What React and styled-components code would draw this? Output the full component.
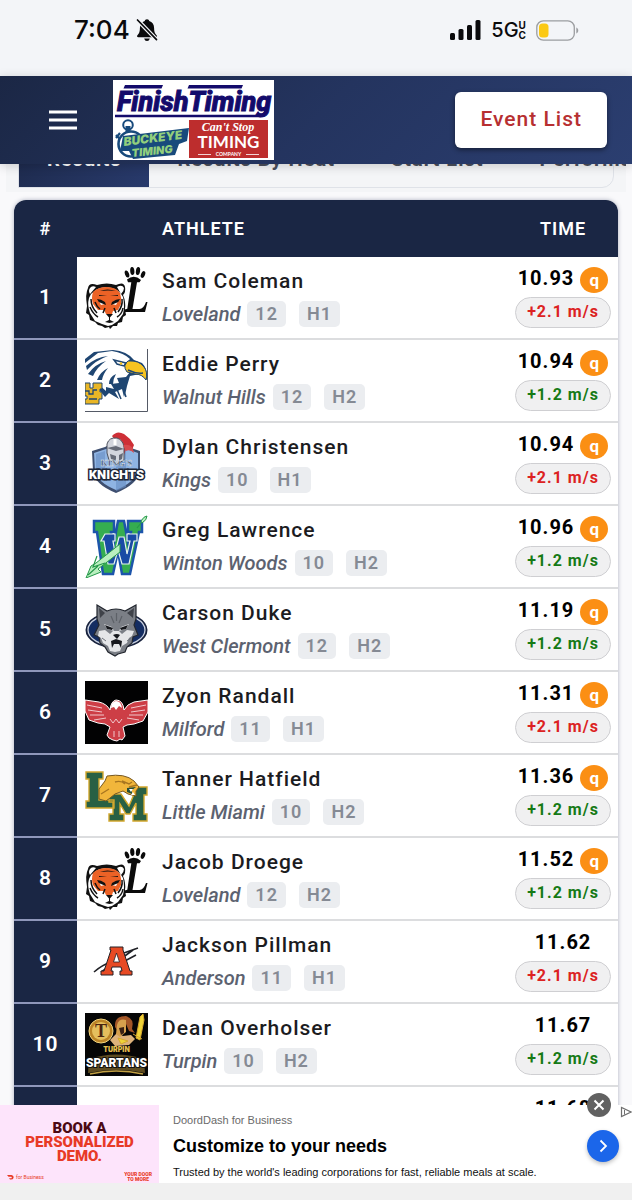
import React from 'react';
import styled, { createGlobalStyle, css } from 'styled-components';

const GlobalStyle = createGlobalStyle`
  *, *::before, *::after { box-sizing: border-box; }
  body { margin: 0; background: #f9f9fb; font-family: Roboto, "Liberation Sans", sans-serif; }
  button { font-family: inherit; cursor: pointer; }
`;

const Shell = styled.div`
  display: flex;
  flex-direction: column;
  height: 100vh;
  overflow: hidden;
`;

/* ---------- phone status bar ---------- */
const StatusBar = styled.div`
  flex: none;
  display: flex;
  align-items: center;
  justify-content: space-between;
  height: 76px;
  padding: 0 53px 16px 74px;
  background: #f3f5f8;
  color: #0a0a0c;
  font-family: Inter, sans-serif;
`;
const StatusGroup = styled.div`
  display: flex;
  align-items: center;
  gap: ${(p) => p.$gap}px;
`;
const Clock = styled.span`
  font-size: 26px;
  font-weight: 500;
  line-height: 30px;
`;
const Network = styled.span`
  display: flex;
  align-items: center;
  font-size: 20px;
  font-weight: 500;
  line-height: 24px;
`;
const NetworkBand = styled.span`
  display: flex;
  flex-direction: column;
  font-size: 10px;
  font-weight: 700;
  line-height: 10px;
`;

/* ---------- site header ---------- */
const Header = styled.header`
  flex: none;
  position: relative;
  z-index: 2;
  display: flex;
  align-items: center;
  height: 88px;
  padding: 0 25px 0 46px;
  background: linear-gradient(135deg, #1b2745 0%, #24345f 50%, #2b3e70 100%);
  box-shadow: 0 2px 10px rgba(0, 0, 0, 0.18);
`;
const MenuButton = styled.button`
  display: flex;
  padding: 0;
  margin-right: 33px;
  border: 0;
  background: none;
`;
const HomeLink = styled.a`
  display: block;
  line-height: 0;
`;
const EventButton = styled.button`
  margin-left: auto;
  height: 56px;
  padding: 0 25px 3px;
  border: 0;
  border-radius: 6px;
  background: #fff;
  color: #b72f31;
  font-size: 21px;
  font-weight: 500;
  letter-spacing: 1px;
  box-shadow: 0 2px 5px rgba(0, 0, 0, 0.45);
`;

/* ---------- scrolled content ---------- */
const Content = styled.main`
  flex: 1;
  min-height: 0;
  overflow: hidden;
`;
const TabStrip = styled.div`
  margin: -34px 6px 8px;
  padding: 0 12px 4px;
  background: #f4f5f7;
  overflow: hidden;
`;
const TabList = styled.div`
  display: flex;
  height: 58px;
  border: 1px solid #dfe2e8;
  border-radius: 12px;
  border-bottom-left-radius: 0;
`;
const Tab = styled.button`
  flex: none;
  padding: 0 28px;
  border: 0;
  background: ${(p) => (p.$active ? 'linear-gradient(135deg, #1c2848, #283a6c)' : 'none')};
  color: ${(p) => (p.$active ? '#fff' : '#4b4f5c')};
  font-size: 20px;
  font-weight: 700;
  line-height: 26px;
  letter-spacing: 1px;
`;

const Card = styled.section`
  margin: 0 14px;
  border-radius: 12px 12px 0 0;
  background: #fff;
  box-shadow: 0 0 4px rgba(30, 40, 80, 0.35);
  overflow: hidden;
`;
const Results = styled.table`
  width: 100%;
  table-layout: fixed;
  border-collapse: separate;
  border-spacing: 0;
`;
const HeadCell = styled.th`
  width: ${(p) => (p.$width ? `${p.$width}px` : 'auto')};
  height: 57px;
  padding: 0 ${(p) => (p.$align === 'left' ? 8 : 0)}px;
  background: #1a2644;
  color: #fff;
  font-size: 18px;
  font-weight: 600;
  letter-spacing: 1px;
  text-align: ${(p) => p.$align || 'center'};
`;
const Row = styled.tr`
  height: 83px;
`;
const cell = css`
  padding: 0;
  border-bottom: 2px solid #dcdddf;
`;
const RankCell = styled.th`
  ${cell}
  border-bottom-color: #8f97bb;
  background: #1a2644;
  color: #fff;
  font-size: 21px;
  font-weight: 600;
  letter-spacing: 1px;
  padding-bottom: 2px;
`;
const LogoCell = styled.td`
  ${cell}
  padding-left: 8px;
  line-height: 0;
`;
const AthleteCell = styled.td`
  ${cell}
  padding-left: 8px;
`;
const TimeCell = styled.td`
  ${cell}
`;
const Name = styled.div`
  color: #1c1c1f;
  font-size: 21px;
  font-weight: 500;
  line-height: 32px;
  letter-spacing: 1px;
  white-space: nowrap;
`;
const Detail = styled.div`
  display: flex;
  align-items: center;
  height: 34px;
`;
const School = styled.em`
  margin-right: 7px;
  color: #5c6270;
  font-size: 20px;
  font-weight: 500;
  line-height: 26px;
  white-space: nowrap;
`;
const Chip = styled.span`
  margin-right: 13px;
  padding: 0 8px;
  border-radius: 5px;
  background: #ebedf0;
  color: #858a94;
  font-size: 18px;
  font-weight: 600;
  line-height: 26px;
  letter-spacing: 1px;
`;
const TimeStack = styled.div`
  display: flex;
  flex-direction: column;
  align-items: center;
  gap: 4px;
`;
const TimeLine = styled.div`
  display: flex;
  align-items: center;
  gap: 6px;
  height: 26px;
`;
const Mark = styled.strong`
  padding-bottom: 4px;
  color: #000;
  font-size: 20px;
  font-weight: 700;
  line-height: 24px;
  letter-spacing: 1px;
`;
const Qualifier = styled.span`
  width: 28px;
  height: 26px;
  border-radius: 50%;
  background: #fb8f14;
  color: #fff;
  font-size: 17px;
  font-weight: 700;
  line-height: 26px;
  text-align: center;
`;
const Wind = styled.span`
  width: 96px;
  height: 31px;
  border: 1px solid #cfcfd2;
  border-radius: 16px;
  background: #f0f0f1;
  color: ${(p) => (p.$over ? '#dc2222' : '#167a16')};
  font-size: 16px;
  font-weight: 700;
  line-height: 28px;
  letter-spacing: 1px;
  text-align: center;
`;

/* ---------- sponsored banner ---------- */
const Banner = styled.aside`
  flex: none;
  position: relative;
  z-index: 3;
  display: flex;
  height: 95px;
  border-bottom: 17px solid #f0f0f0;
  background: #fff;
  font-family: "Liberation Sans", Arial, sans-serif;
`;
const Promo = styled.div`
  flex: none;
  display: flex;
  flex-direction: column;
  justify-content: space-between;
  width: 159px;
  padding: 16px 7px 1px;
  background: #fde4fb;
  color: #e83a26;
  font-family: Roboto, sans-serif;
`;
const PromoTitle = styled.div`
  font-size: 15px;
  font-weight: 900;
  line-height: 14px;
  text-align: center;
`;
const PromoDark = styled.span`
  color: #4c0913;
`;
const PromoFoot = styled.div`
  display: flex;
  align-items: center;
  justify-content: space-between;
  font-size: 5px;
  font-weight: 900;
  line-height: 5px;
  text-align: center;
`;
const PromoBrand = styled.span`
  display: flex;
  align-items: center;
  gap: 2px;
  font-weight: 400;
`;
const Copy = styled.div`
  flex: 1;
  min-width: 0;
  padding: 6px 0 0 14px;
  white-space: nowrap;
`;
const Sponsor = styled.div`
  color: #6a6a6a;
  font-size: 11px;
  line-height: 18px;
`;
const Headline = styled.div`
  margin: 6px 0;
  color: #000;
  font-size: 18px;
  font-weight: 700;
  line-height: 22px;
`;
const Blurb = styled.div`
  color: #111;
  font-size: 11px;
  line-height: 18px;
`;
const GoLink = styled.a`
  flex: none;
  align-self: center;
  display: flex;
  align-items: center;
  justify-content: center;
  width: 32px;
  height: 32px;
  margin: 4px 13px 0 0;
  border-radius: 50%;
  background: #1b66ea;
  box-shadow: 0 2px 4px rgba(0, 0, 0, 0.25);
`;
const CloseButton = styled.button`
  position: absolute;
  top: -12px;
  right: 21px;
  display: flex;
  align-items: center;
  justify-content: center;
  width: 24px;
  height: 24px;
  padding: 0;
  border: 0;
  border-radius: 50%;
  background: #616161;
`;
const AdChoices = styled.a`
  position: absolute;
  top: 1px;
  right: 0;
  line-height: 0;
`;

/* ---------- status icons ---------- */
const MutedBell = () => (
  <svg width="22" height="24" viewBox="0 0 22 24" aria-hidden="true">
    <path d="M11 1.300c1.300 0 2.100.8 2.200 1.800 3.100.9 4.900 3.500 4.900 6.900 0 4.500 1.100 5.700 2.500 7.300.8.900.3 2-.9 2H2.300c-1.200 0-1.700-1.100-.9-2 1.400-1.600 2.500-2.800 2.500-7.300 0-3.400 1.800-6 4.900-6.900.1-1 .9-1.800 2.200-1.800Z" fill="#0a0a0c" />
    <path d="M8.200 20.500h5.600c-.4 1.700-1.400 2.500-2.800 2.500s-2.400-.8-2.800-2.500Z" fill="#0a0a0c" />
    <path d="M1.500 2 20.500 21.700" stroke="#f3f5f8" strokeWidth="4" />
    <path d="M1.500 2 20.500 21.700" stroke="#0a0a0c" strokeWidth="1.700" strokeLinecap="round" />
  </svg>
);
const Signal = () => (
  <svg width="31" height="20" viewBox="0 0 31 20" fill="#0a0a0c" aria-hidden="true">
    <rect x="0" y="13" width="5" height="7" rx="1.500" />
    <rect x="8.500" y="9" width="5" height="11" rx="1.500" />
    <rect x="17" y="5" width="5" height="15" rx="1.500" />
    <rect x="25.500" y="0" width="5" height="20" rx="1.500" />
  </svg>
);
const Battery = () => (
  <svg width="43" height="21" viewBox="0 0 43 21" aria-hidden="true">
    <rect x="0.800" y="0.800" width="37.500" height="19.400" rx="6.500" fill="none" stroke="#9b9da0" strokeWidth="1.300" />
    <rect x="3" y="3.500" width="9.500" height="14" rx="3.500" fill="#fbc914" />
    <path d="M40.300 7.500c2.600 1 2.600 5 0 6Z" fill="#9b9da0" />
  </svg>
);

/* ---------- brand mark ---------- */
const BrandLogo = () => (
  <svg width="161" height="80" viewBox="0 0 161 80" role="img" aria-label="Finish Timing">
    <rect width="161" height="80" fill="#fff" />
    <text x="4" y="31" fontFamily="Roboto" fontSize="27" fontWeight="800" fontStyle="italic" fill="#130b6b" stroke="#130b6b" strokeWidth="1">FinishTiming</text>
    <path d="M12 5h38l-1.500 3.500H10.500ZM76 5h54l-1.500 3.500H74.500Z" fill="#130b6b" />
    <path d="M2 36h144q5 0 7-5" fill="none" stroke="#130b6b" strokeWidth="2.600" />
    <g fill="none" stroke="#184a7c">
      <circle cx="18" cy="64" r="12.500" strokeWidth="2.600" />
      <circle cx="15" cy="45" r="4.800" strokeWidth="2" />
      <path d="M15 46v6" strokeWidth="5" />
      <path d="m3 55 4 4M7 53l-4 5" strokeWidth="2.200" />
    </g>
    <path d="m10 56 66-8-2 13-8 3-4 11-42 4-4-8-9 0Z" fill="#184a7c" />
    <g fontFamily="Inter" fontStyle="italic" fontWeight="900" fill="#91cf7d">
      <text x="11" y="66" fontSize="12" transform="rotate(-7 11 66)">BUCKEYE</text>
      <text x="19" y="77" fontSize="11" transform="rotate(-6 19 77)">TIMING</text>
    </g>
    <rect x="76" y="40" width="79" height="38" fill="#bd2d2d" />
    <text x="115" y="51" textAnchor="middle" fontFamily="Liberation Serif" fontStyle="italic" fontWeight="700" fontSize="12" fill="#fff">Can't Stop</text>
    <text x="115.500" y="68" textAnchor="middle" fontFamily="Lato" fontWeight="700" fontSize="17" fill="#fff">TIMING</text>
    <text x="115.500" y="76" textAnchor="middle" fontFamily="Lato" fontWeight="700" fontSize="5" fill="#fff">COMPANY</text>
    <path d="M85 74.500h13M133 74.500h13" stroke="#fff" strokeWidth="0.800" />
  </svg>
);

/* ---------- school logos ---------- */
const Crest = ({ label, children }) => (
  <svg width="63" height="63" viewBox="0 0 63 63" role="img" aria-label={label}>{children}</svg>
);

const Loveland = () => (
  <Crest label="Loveland">
    <g fill="#0b0b0b">
      <ellipse cx="42" cy="8" rx="2" ry="3.700" transform="rotate(-20 42 8)" />
      <ellipse cx="47.300" cy="5" rx="2.100" ry="4" transform="rotate(-5 47.300 5)" />
      <ellipse cx="53" cy="5" rx="2.100" ry="4" transform="rotate(8 53 5)" />
      <ellipse cx="58" cy="8.500" rx="2" ry="3.500" transform="rotate(22 58 8.500)" />
      <path d="M42 13.500q7-5.500 14 .5l-1.500 2.200h-2.500L47.500 43h7q4 0 6.500-7h1.500L60 46H39l.8-2.500 2.500-.8 4-26.500H43Z" />
    </g>
    <path d="M3 22q1-6 9-3 10-3 19 0 8-4 9 2 1 5-2 8 3 7 2 14l1 6-3 2-1 5-4 1-1 3-4 0-3 3-1-2-4 1-3-2-4-1-3-3-5-2-1-5-3-2 1-7q-2-12 1-18Z" fill="#111" />
    <path d="M5 22q2-3 6-1l-6 7Q3 25 5 22ZM32 21q5-3 7 1 0 3-3 6Z" fill="#fff" />
    <path d="M4 32q4-10 17-11 13 1 17 10 2 9 0 17l-5 7-6 4-4 1-6-2-7-3-5-8Q2 39 4 32Z" fill="#fff" />
    <path d="M8 26q5-5 14-5 9 0 13 6 2 6 1 11l-3 6-5 1-1 3h-6l-2-4-6 0-5-6Q6 32 8 26Z" fill="#ec6226" />
    <path d="m14 35 6 3-4 1ZM33 35l-6 3 4 1Z" fill="#fff" />
    <path d="M12 33q4 0 8 3l1 3-5-2q-3-1-4-4ZM35 33q-4 0-8 3l-1 3 5-2q3-1 4-4ZM15 25q7-3 16 0-8-1-16 0ZM14 29l8 0-8 1ZM33 29l-8 0 8 1ZM21 48h7l-3.500 4ZM24 50h1v4l4 2-4.500 1-4.500-1 4-2Z" fill="#111" />
    <path d="M6 33q0 8 6 14M5 41q3 7 8 10M10 36q2 5 5 7M37 33q1 7-4 13M38 42q-1 6-6 9M20 42l-2 5M29 42l2 5" fill="none" stroke="#111" strokeWidth="1.500" />
  </Crest>
);

const WalnutHills = () => (
  <Crest label="Walnut Hills">
    <path d="M0 62.500h62.500V0" fill="none" stroke="#555a66" strokeWidth="1" />
    <path d="M0 10 9 3 28 1q14 1 21 10l8 3q6 6 5 17-4-6-12-5l-5 1-3 10q-1 6-3 11l-2-8-7 3 4 7-10-6-4 4-8-10-13-1Z" fill="#1f4672" />
    <path d="M0 14 13 4l14-2q12 2 18 8l-5 5 5 8-4 5-9 1 2 5-8 1 3 5-8-2 0 4-8-7-5 4-8-1Z" fill="#fff" />
    <path d="M1 17q10-9 22-10Q11 11 2 21ZM3 25q7-10 18-13-9 6-13 15ZM12 31q3-8 11-12-5 6-6 12ZM24 35q0-7 7-10-3 5-3 10Z" fill="#1f4672" />
    <path d="M43 12q11-1 16 6 4 5 2 13-4-6-11-6l-8-2q-5-7 1-11Z" fill="#f6c321" stroke="#1f4672" strokeWidth="1" />
    <path d="M43 21q8 4 15 3M29 11l12 3-2 3-7-2ZM38 39l3 9M31 38l5 12" fill="none" stroke="#1f4672" strokeWidth="1.500" />
    <circle cx="36" cy="14.500" r="1.300" fill="#f6c321" />
    <path d="M0 34h5v5h3v-5h9v6h-2v3h2v7h-3v5H0v-5h2v-3H0Z" fill="#e9b626" stroke="#1f4672" strokeWidth="1" />
    <path d="M0 42h4v3h4v-4h4M4 50h8" fill="none" stroke="#1f4672" strokeWidth="1.300" />
  </Crest>
);

const Kings = () => (
  <Crest label="Kings Knights">
    <path d="m7 19 13-4 11-6 12 6 12 4v20q-2 13-24 22Q9 52 8 39Z" fill="#3e4f70" />
    <path d="m9 21 12-4 10-5 11 5 11 4v18q-3 11-22 19Q12 50 10 39Z" fill="#8fb4e3" />
    <path d="m31 13 10 5v37l-10 4ZM11 22l9-3v30q-9-6-9-13Z" fill="#6a91c6" opacity=".65" />
    <path d="M27 4q5-6 12-2l6 5 4 6-2 5-6-1-2 6-5-6-2-6Z" fill="#ce2f36" />
    <path d="M22 12q2-7 10-6 6 2 7 9v13l-7 4-8-4-2-7Z" fill="#d2d5dd" stroke="#4e535e" strokeWidth="1" />
    <path d="m22 16 9-2 8 3-8 2ZM25 22l6 2v5l-5-2ZM34 23l4-2-1 6-3 2Z" fill="#656a77" />
    <path d="M30 7v6" stroke="#fff" strokeWidth="3" />
    <path d="M38 13q10-2 11 8-4-4-8-2Z" fill="#d64a4e" />
    <text x="31.500" y="34" textAnchor="middle" fontFamily="Liberation Serif" fontSize="9" fontWeight="700" fill="#31405b" stroke="#dfe5ef" strokeWidth=".4">KING'S</text>
    <text x="31.500" y="47" textAnchor="middle" fontFamily="Roboto" fontSize="13" fontWeight="900" fill="#fff" stroke="#1d2637" strokeWidth="3" paintOrder="stroke">KNIGHTS</text>
  </Crest>
);

const WintonWoods = () => (
  <Crest label="Winton Woods">
    <path d="M9 6h20v11h-3l2 16 5-27h6l5 27 2-16h-3V6h14v11h-3l-9 42H37l-4-23-5 23H18L12 17H9Z" fill="#35ad50" stroke="#1c55ab" strokeWidth="2.500" />
    <path d="M20 19h10v7h-2l2 12 4-16h5l3 17 3-13h-3v-7h10v7h-3l-5 23h-7l-4-14-4 14h-6l-4-23h-3Z" fill="#194ba5" stroke="#e8f4ef" strokeWidth="1.200" />
    <path d="M62 1q-3 0-6 5l1 2q5-3 5-7ZM35 29 11 48l-5 3-5 12 15-6-3-3 22-17Z" fill="#b9efbf" stroke="#26994a" strokeWidth="1" />
    <path d="m56 8-4 5M3 60l10-9M12 41l-4 11 12-4" stroke="#26994a" strokeWidth="1.200" fill="none" />
  </Crest>
);

const WestClermont = () => (
  <Crest label="West Clermont">
    <ellipse cx="31.500" cy="32" rx="31" ry="18.500" fill="#17213c" />
    <ellipse cx="31.500" cy="32" rx="28.500" ry="16" fill="#142d62" stroke="#c7cfdf" strokeWidth="1.300" />
    <path d="m12 7 10 6q9-4 18 0l11-6 0 14-2 6 4 10-5 2-1 6-5 4-2 5-7 2-3 2-7-4-3-5-5-4-1-6-5-2 5-10-2-6Z" fill="#7b7f86" stroke="#22262e" strokeWidth="1.200" />
    <path d="m14 10 6 5-5 5ZM49 10l-7 5 6 5Z" fill="#3f4249" />
    <path d="m14 33 6-1 5 4 3-3h6l3 3 5-4 7 1-2 5-3 2-2 5-5 3-2 5-5 1-5-1-2-5-5-3-2-5-3-2Z" fill="#e5e6e8" />
    <path d="m19 26 8 3 2 4-7-2ZM44 26l-8 3-2 4 7-2Z" fill="#dfe1e4" />
    <path d="m20 27 8 3-1 2-5-1ZM43 27l-8 3 1 2 5-1ZM28 37q4-2 7 0l-3 4ZM26 43l5-2 6 2-1 7-2-4h-5l-2 4Z" fill="#16181d" />
    <path d="m26 18 3 7M37 18l-3 7M31.500 15v8" stroke="#5d6168" strokeWidth="1.200" />
    <path d="m17 40 4 3M46 40l-4 3" stroke="#6c7077" strokeWidth="1" />
  </Crest>
);

const Milford = () => (
  <Crest label="Milford">
    <rect width="63" height="63" fill="#020203" />
    <path d="M0 19l14 2q8 2 11 8 1-9 6-10 7 0 8 10 3-6 10-8l14-2v12l-5 9-9 3-7 1-4 2 2 9-3 4-2-1-3 2-4-1-4-2-2-3 3-8-5-3-7-1-9-3-4-9Z" fill="#cd3e46" stroke="#fff" strokeWidth="1" />
    <path d="M26 27q0-6 5-7 5 0 6 7l-3-2-3 4-2-3Z" fill="#fff" />
    <path d="m2 24 15 3M3 29l14 2M5 34l14 0M9 39l12-2M61 24l-15 3M60 29l-14 2M58 34l-14 0M54 39l-12-2M25 38l3 4 3-4 3 4 3-4M29 50v6M34 50v6" fill="none" stroke="#f0c7cb" strokeWidth="1" />
  </Crest>
);

const LittleMiami = () => (
  <Crest label="Little Miami">
    <path d="M1 8h17v7h-4v21h15v8H1v-7h3V15H1ZM24 50h4V38h-4v-8h12l8 12 8-19h10v8h-3v19h3v7H48v-7h3V39l-6 11h-4l-6-10v10h4v7H24Z" fill="#286044" stroke="#d2a72d" strokeWidth="1.400" />
    <path d="M14 35V25l6-8 2-5q18-3 27 5l5 6-3 4 0 5-8-2-5-3-8 3-5 4-4 3Z" fill="#f1b63b" stroke="#775821" strokeWidth="1" />
    <path d="m37 17 7 3 3-2M44 23l8-2M30 18q6-2 10 2M16 30l8-5" fill="none" stroke="#a87620" strokeWidth="1.400" />
    <path d="m42 24 9-1-4 3v4l-5-2Z" fill="#254e3b" />
    <path d="m44 25 2 3 2-3ZM46 31l2-3 2 3Z" fill="#fff" />
  </Crest>
);

const Anderson = () => (
  <Crest label="Anderson">
    <path d="M9 42q8-7 17-10M16 42q6-5 12-7M36 24l17-6M37 28l11-8M38 32l13-7" stroke="#202126" strokeWidth="1.600" fill="none" />
    <path d="M25 17h13v3l7 21h2v4H35v-4h2l-1-4h-9l-1 4h2v4H16v-4h3l7-21h-1Z" fill="#e74a24" stroke="#242126" strokeWidth="1" />
    <path d="m31.500 23-3 9h6Z" fill="#fff" stroke="#242126" strokeWidth=".8" />
  </Crest>
);

const Turpin = () => (
  <Crest label="Turpin Spartans">
    <rect width="63" height="63" fill="#060606" />
    <path d="m25 27 7-7 6 3 8-1 4 4-6 6-14 1Z" fill="#ddb27b" />
    <path d="M30 14q-1-11 11-11 9 3 6 13l3 4-6-2-3-7-5 2-1 8Z" fill="#a35627" />
    <path d="M32 12q2-7 9-5v12l-6 5-4-3Z" fill="#d6a04d" />
    <path d="m34 15 5-1v6l-3 2Z" fill="#3a2115" />
    <path d="m55 4 3-3 1 6-4 20-4-2ZM48 21l9 5M33 25l10 3-7 3Z" fill="#efd338" stroke="#d6a82f" strokeWidth="1" />
    <circle cx="16" cy="18" r="12" fill="#bb8427" stroke="#f1d57f" strokeWidth="1" />
    <circle cx="16" cy="18" r="9" fill="#e5bf5d" />
    <text x="16" y="24" textAnchor="middle" fontFamily="Liberation Serif" fontSize="18" fontWeight="700" fill="#4a2310">T</text>
    <text x="31.500" y="39" textAnchor="middle" fontFamily="Inter" fontSize="7" fontWeight="900" fill="#e4bf4e">TURPIN</text>
    <path d="M4 46q27-9 55 0l1 14q-28-6-57 0Z" fill="#5d4b20" />
    <text x="31.500" y="54" textAnchor="middle" fontFamily="Roboto" fontSize="12" fontWeight="900" fill="#fff" stroke="#111" strokeWidth="2" paintOrder="stroke">SPARTANS</text>
    <path d="M5 61q26-6 53 0" fill="none" stroke="#c3a143" strokeWidth="1.500" />
  </Crest>
);

const ATHLETES = [
  { name: 'Sam Coleman', school: 'Loveland', grade: 12, heat: 'H1', time: '10.93', wind: '+2.1 m/s', q: true, Logo: Loveland },
  { name: 'Eddie Perry', school: 'Walnut Hills', grade: 12, heat: 'H2', time: '10.94', wind: '+1.2 m/s', q: true, Logo: WalnutHills },
  { name: 'Dylan Christensen', school: 'Kings', grade: 10, heat: 'H1', time: '10.94', wind: '+2.1 m/s', q: true, Logo: Kings },
  { name: 'Greg Lawrence', school: 'Winton Woods', grade: 10, heat: 'H2', time: '10.96', wind: '+1.2 m/s', q: true, Logo: WintonWoods },
  { name: 'Carson Duke', school: 'West Clermont', grade: 12, heat: 'H2', time: '11.19', wind: '+1.2 m/s', q: true, Logo: WestClermont },
  { name: 'Zyon Randall', school: 'Milford', grade: 11, heat: 'H1', time: '11.31', wind: '+2.1 m/s', q: true, Logo: Milford },
  { name: 'Tanner Hatfield', school: 'Little Miami', grade: 10, heat: 'H2', time: '11.36', wind: '+1.2 m/s', q: true, Logo: LittleMiami },
  { name: 'Jacob Droege', school: 'Loveland', grade: 12, heat: 'H2', time: '11.52', wind: '+1.2 m/s', q: true, Logo: Loveland },
  { name: 'Jackson Pillman', school: 'Anderson', grade: 11, heat: 'H1', time: '11.62', wind: '+2.1 m/s', q: false, Logo: Anderson },
  { name: 'Dean Overholser', school: 'Turpin', grade: 10, heat: 'H2', time: '11.67', wind: '+1.2 m/s', q: false, Logo: Turpin },
];

const TABS = ['Results', 'Results By Heat', 'Start List', 'Performances'];

function AthleteRow({ rank, athlete }) {
  const { name, school, grade, heat, time, wind, q, Logo } = athlete;
  return (
    <Row>
      <RankCell scope="row">{rank}</RankCell>
      <LogoCell><Logo /></LogoCell>
      <AthleteCell>
        <Name>{name}</Name>
        <Detail>
          <School>{school}</School>
          <Chip>{grade}</Chip>
          <Chip>{heat}</Chip>
        </Detail>
      </AthleteCell>
      <TimeCell>
        <TimeStack>
          <TimeLine>
            <Mark>{time}</Mark>
            {q && <Qualifier>q</Qualifier>}
          </TimeLine>
          <Wind $over={wind.startsWith('+2.1')}>{wind}</Wind>
        </TimeStack>
      </TimeCell>
    </Row>
  );
}

export default function App() {
  return (
    <Shell>
      <GlobalStyle />
      <StatusBar>
        <StatusGroup $gap={6}>
          <Clock>7:04</Clock>
          <MutedBell />
        </StatusGroup>
        <StatusGroup $gap={10}>
          <Signal />
          <Network>
            5G
            <NetworkBand><span>U</span><span>C</span></NetworkBand>
          </Network>
          <Battery />
        </StatusGroup>
      </StatusBar>

      <Header>
        <MenuButton aria-label="Open menu">
          <svg width="34" height="24" viewBox="0 0 34 24" aria-hidden="true">
            <path d="M3 4h28M3 12h28M3 20h28" stroke="#fff" strokeWidth="3" />
          </svg>
        </MenuButton>
        <HomeLink href="#home"><BrandLogo /></HomeLink>
        <EventButton>Event List</EventButton>
      </Header>

      <Content>
        <TabStrip>
          <TabList role="tablist">
            {TABS.map((label, i) => (
              <Tab key={label} role="tab" aria-selected={i === 0} $active={i === 0}>{label}</Tab>
            ))}
          </TabList>
        </TabStrip>
        <Card>
          <Results>
            <thead>
              <tr>
                <HeadCell scope="col" $width={63}>#</HeadCell>
                <HeadCell scope="col" $width={77} aria-label="School" />
                <HeadCell scope="col" $align="left">ATHLETE</HeadCell>
                <HeadCell scope="col" $width={110}>TIME</HeadCell>
              </tr>
            </thead>
            <tbody>
              {ATHLETES.map((athlete, i) => (
                <AthleteRow key={athlete.name} rank={i + 1} athlete={athlete} />
              ))}
              <Row>
                <RankCell scope="row">11</RankCell>
                <LogoCell />
                <AthleteCell />
                <TimeCell>
                  <TimeStack>
                    <TimeLine><Mark>11.68</Mark></TimeLine>
                    <Wind>+1.2 m/s</Wind>
                  </TimeStack>
                </TimeCell>
              </Row>
            </tbody>
          </Results>
        </Card>
      </Content>

      <Banner>
        <Promo>
          <PromoTitle>
            <PromoDark>BOOK A</PromoDark><br />PERSONALIZED<br />DEMO.
          </PromoTitle>
          <PromoFoot>
            <PromoBrand>
              <svg width="7" height="5" viewBox="0 0 7 5" aria-hidden="true">
                <path d="M0 0h4.500Q7 .5 6.500 3 6 4.500 4 4.500H3L2 3.200h2.500q.8-.8-.2-1.500H1.500Z" fill="#e83a26" />
              </svg>
              for Business
            </PromoBrand>
            <span>YOUR DOOR<br />TO MORE</span>
          </PromoFoot>
        </Promo>
        <Copy>
          <Sponsor>DoordDash for Business</Sponsor>
          <Headline>Customize to your needs</Headline>
          <Blurb>Trusted by the world's leading corporations for fast, reliable meals at scale.</Blurb>
        </Copy>
        <GoLink href="#offer" aria-label="Open offer">
          <svg width="14" height="14" viewBox="0 0 14 14" aria-hidden="true">
            <path d="m4.500 1.500 5.500 5.500-5.500 5.500" fill="none" stroke="#fff" strokeWidth="1.800" />
          </svg>
        </GoLink>
        <CloseButton aria-label="Close ad">
          <svg width="12" height="12" viewBox="0 0 12 12" aria-hidden="true">
            <path d="m1.500 1.500 9 9M10.500 1.500l-9 9" stroke="#fff" strokeWidth="2" />
          </svg>
        </CloseButton>
        <AdChoices href="#adchoices" aria-label="Ad choices">
          <svg width="12" height="12" viewBox="0 0 12 12" aria-hidden="true">
            <path d="M1.500 1.500v9L11 6Z" fill="none" stroke="#6f6f6f" strokeWidth="1.200" />
            <path d="M4.500 4v4.500" stroke="#6f6f6f" />
          </svg>
        </AdChoices>
      </Banner>
    </Shell>
  );
}
